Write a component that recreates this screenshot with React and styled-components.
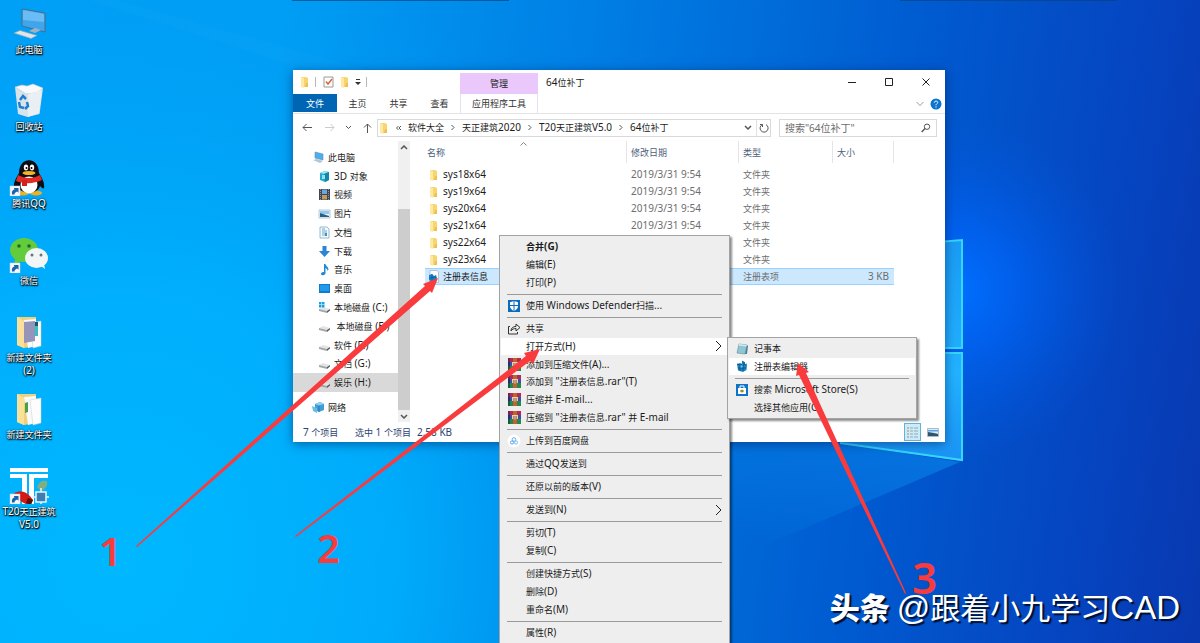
import React from "react";
import styled, { createGlobalStyle, css } from "styled-components";

const GlobalStyle = createGlobalStyle`
  *, *::before, *::after { box-sizing: border-box; }
  body {
    margin: 0;
    font-family: "Noto Sans", "Noto Sans CJK SC", sans-serif;
    font-size: 10px;
    line-height: 14px;
    color: #1b1b1b;
  }
  button, input { font: inherit; color: inherit; border: 0; margin: 0; padding: 0; background: none; }
  a { color: inherit; text-decoration: none; }
  svg { display: block; flex: none; }
`;

/* Chinese runs are set one step smaller than the Latin text beside them. */
const Cjk = styled.span`
  font-size: ${(p) => p.$size}px;
`;

function Text({ children, cjk = 9 }) {
  return (
    <span>
      {children
        .split(/([\u4e00-\u9fff]+)/)
        .filter(Boolean)
        .map((run, i) => (/[\u4e00-\u9fff]/.test(run) ? <Cjk key={i} $size={cjk}>{run}</Cjk> : run))}
    </span>
  );
}

/* ---------- desktop ---------- */

const Desktop = styled.main`
  position: relative;
  width: 100%;
  height: 100vh;
  overflow: hidden;
  background: linear-gradient(98deg, #009ff6 0%, #009df4 22%, #007fe4 46%, #005bd0 72%, #0546c2 88%, #0838b0 100%);
`;

const Layer = styled.svg`
  position: absolute;
  inset: 0;
  width: 100%;
  height: 100%;
  pointer-events: none;
`;

const DesktopIcons = styled.nav`
  position: relative;
  display: flex;
  flex-direction: column;
  width: 58px;
`;

const Shortcut = styled.button`
  display: flex;
  flex-direction: column;
  align-items: center;
  gap: 1px;
  height: 77px;
  padding-top: 6px;
  line-height: 13px;
  color: #fff;
  text-align: center;
  white-space: pre;
  text-shadow: 0 1px 2px #000, 1px 1px 1px #000, 0 0 2px rgba(0, 0, 0, 0.8);
`;

/* ---------- explorer window ---------- */

const Window = styled.section`
  position: absolute;
  left: 293px;
  top: 70px;
  width: 652px;
  display: flex;
  flex-direction: column;
  background: #fff;
  box-shadow: 0 2px 10px rgba(0, 20, 80, 0.5);
`;

const Ribbon = styled.header`
  display: grid;
  grid-template-columns: 167px 78px 1fr auto;
  grid-template-rows: 24px 19px;
  border-bottom: 1px solid #e4e4e4;
`;

const QuickBar = styled.div`
  display: flex;
  align-items: center;
  gap: 5px;
  padding-left: 6px;
`;

const Rule = styled.span`
  width: 1px;
  height: 10px;
  background: #b8b8b8;
`;

const ToolTitle = styled.div`
  display: flex;
  align-items: center;
  justify-content: center;
  margin-top: 3px;
  background: #eac8fb;
`;

const WindowTitle = styled.h1`
  margin: 0;
  padding-left: 8px;
  font-size: 10px;
  font-weight: 400;
  line-height: 24px;
`;

const Controls = styled.div`
  display: flex;
  button {
    display: grid;
    place-items: center;
    width: 37px;
    height: 24px;
  }
`;

const Tabs = styled.div`
  display: flex;
`;

const Tab = styled.button`
  flex: 1;
  height: 18px;
  color: #333;
  ${(p) => p.$primary && css`
    flex: none;
    width: 44px;
    color: #fff;
    background: #0065b3;
  `}
  ${(p) => p.$tool && css`
    height: 19px;
    border: solid #e8e0ee;
    border-width: 0 1px;
  `}
`;

const RibbonEnd = styled.div`
  grid-column: 3 / 5;
  display: flex;
  align-items: center;
  justify-content: flex-end;
  gap: 6px;
  padding-right: 3px;
`;

const AddressRow = styled.div`
  display: flex;
  align-items: center;
  height: 27px;
  padding: 0 8px;
`;

const NavButtons = styled.div`
  display: flex;
  align-items: center;
  justify-content: space-between;
  width: 71px;
  margin-right: 5px;
  padding-left: 1px;
`;

const Field = styled.div`
  display: flex;
  align-items: center;
  height: 18px;
  border: 1px solid #d9d9d9;
`;

const Address = styled(Field)`
  flex: 1;
  gap: 7px;
  margin-right: 8px;
  padding-right: 1px;
`;

const Push = styled.span`
  flex: 1;
`;

const AddressEnd = styled.div`
  display: flex;
  align-items: center;
  gap: 4px;
`;

const Refresh = styled.button`
  display: grid;
  place-items: center;
  height: 16px;
  padding-left: 2px;
  border-left: 1px solid #e2e2e2;
`;

const Search = styled(Field)`
  width: 158px;
  padding: 0 5px;
  input {
    flex: 1;
    min-width: 0;
    outline: 0;
    font-size: 10px;
  }
  input::placeholder { color: #6d6d6d; opacity: 1; }
`;

const Body = styled.div`
  display: flex;
  height: 281px;
`;

const Tree = styled.nav`
  width: 105px;
  padding-top: 7px;
`;

const TreeGroup = styled.div`
  display: grid;
  grid-auto-rows: 1fr;
  height: 244px;
  margin-bottom: 8px;
`;

const TreeItem = styled.a`
  display: flex;
  align-items: center;
  gap: 3px;
  min-height: 0;
  padding-left: ${(p) => (p.$root ? 19 : 25)}px;
  white-space: pre;
  background: ${(p) => (p.$selected ? "#d9d9d9" : "transparent")};
`;

const ScrollBar = styled.div`
  display: flex;
  flex-direction: column;
  width: 12px;
  background: #f0f0f0;
  button {
    display: grid;
    place-items: center;
    height: 12px;
  }
`;

const Thumb = styled.div`
  height: 201px;
  margin-top: auto;
  background: #cdcdcd;
`;

const Files = styled.table`
  position: relative;
  align-self: flex-start;
  width: 469px;
  margin-left: 15px;
  table-layout: fixed;
  border-collapse: separate;
  border-spacing: 0;
`;

const HeadCell = styled.th`
  width: ${(p) => p.$w}px;
  height: 25px;
  padding: 0 0 3px;
  font-weight: 400;
  text-align: left;
  color: #4c607a;
  button {
    display: block;
    width: 100%;
    height: 22px;
    padding-left: ${(p) => (p.$first ? 2 : 4)}px;
    text-align: left;
    border-right: 1px solid #e5e5e5;
  }
`;

const Row = styled.tr`
  td {
    height: 17px;
    padding: 0 0 0 4px;
    line-height: 15px;
    color: #6d6d6d;
    border: solid transparent;
    border-width: 1px 0;
    ${(p) => p.$selected && css`
      background: #cce8ff;
      border-color: #99d1ff;
    `}
  }
  td:first-child { padding-left: 3px; color: #1b1b1b; }
  td:last-child { padding-right: 5px; text-align: right; }
`;

const FileName = styled.span`
  display: flex;
  align-items: center;
  gap: 4px;
`;

const SortMark = styled.span`
  position: absolute;
  left: 95px;
  top: 1px;
`;

const StatusBar = styled.footer`
  display: flex;
  align-items: center;
  gap: 6px;
  height: 20px;
  padding: 0 6px 0 10px;
  color: #2c4470;
  white-space: pre;
`;

const Count = styled.span`
  width: 46px;
`;

const ViewButton = styled.button`
  display: grid;
  place-items: center;
  width: 17px;
  height: 18px;
  border: 1px solid ${(p) => (p.$on ? "#5fb4dc" : "transparent")};
  background: ${(p) => (p.$on ? "#cdebf7" : "transparent")};
`;

/* ---------- context menus ---------- */

const Menu = styled.div`
  position: absolute;
  left: ${(p) => p.$x}px;
  top: ${(p) => p.$y}px;
  width: ${(p) => p.$w}px;
  padding: 2px 1px;
  background: #eee;
  border: 1px solid #a3a3a3;
  box-shadow: 2px 2px 2px rgba(0, 0, 0, 0.45);
`;

const groupHeight = { 1: 17, 2: 35, 3: 53, 6: 106 };

const MenuGroup = styled.div`
  display: grid;
  grid-auto-rows: 1fr;
  height: ${(p) => groupHeight[p.$count]}px;
`;

const Separator = styled.hr`
  height: 1px;
  margin: 3px 6px 2px;
  border: 0;
  background: #9b9b9b;
`;

const MenuItem = styled.button`
  display: grid;
  grid-template-columns: 14px 1fr auto;
  align-items: center;
  gap: 5px;
  min-height: 0;
  padding: 0 6px;
  line-height: 14px;
  text-align: left;
  white-space: pre;
  font-weight: ${(p) => (p.$bold ? 700 : 400)};
  background: ${(p) => (p.$active ? "#fff" : "transparent")};
`;

/* ---------- annotations ---------- */

const Note = styled.span`
  position: absolute;
  left: ${(p) => p.$x}px;
  top: ${(p) => p.$y}px;
  font-size: ${(p) => p.$size}px;
  line-height: 40px;
  font-weight: 600;
  color: #f93b3d;
`;

const Watermark = styled.p`
  position: absolute;
  right: 20px;
  bottom: 14px;
  display: flex;
  align-items: baseline;
  gap: 7px;
  margin: 0;
  font-family: "Liberation Sans", "Noto Sans CJK SC", sans-serif;
  font-size: 33px;
  line-height: 40px;
  color: #fff;
  white-space: nowrap;
  text-shadow: 2px 2px 1px #00102e;
  strong { font-size: 30px; font-weight: 900; }
`;

/* ---------- drawings ---------- */

const Chevron = ({ d, w = 8, h = 8, color = "#555", sw = 1 }) => (
  <svg width={w} height={h} viewBox={`0 0 ${w} ${h}`} fill="none" stroke={color} strokeWidth={sw}>
    <path d={d} />
  </svg>
);

const FolderIcon = () => (
  <svg width="11" height="12" viewBox="0 0 11 12">
    <path d="M2 1h5l2 1v9H2z" fill="#f7d672" />
    <path d="M2 1l3 1v10L2 11z" fill="#ffe9a2" />
    <path d="M7 7h2v4H6z" fill="#efc04f" />
  </svg>
);

const RegFileIcon = () => (
  <svg width="11" height="13" viewBox="0 0 11 13">
    <path d="M2 .5h7l1.500 1.500v10.500H2z" fill="#fafcff" stroke="#9db2c5" strokeWidth=".7" />
    <path d="M1 5l3-1 2 2 2-1 1 3-1 3-4 1-3-2z" fill="#1786c8" />
    <path d="M4 4v8M1 8l7-1" stroke="#0c5c98" strokeWidth=".8" />
  </svg>
);

const RegEditIcon = () => (
  <svg width="14" height="14" viewBox="0 0 14 14">
    <path d="M2 5l3-1 2 1V2l3 1v2l2 1-.5 5L8 13l-5-1.500z" fill="#1a86c4" />
    <path d="M2 5l3 1v6M5 6l2-1M8 6v6M8 6l4-1M3 9l8 0M7 2l2 1.500v2" stroke="#0a4f80" fill="none" strokeWidth=".8" />
    <path d="M5.500 6.500h2v2h-2z" fill="#6fd3f2" />
  </svg>
);

const TreeIcon = ({ kind }) => (
  <svg width="13" height="13" viewBox="0 0 13 13">
    {kind === "pc" && (
      <>
        <path d="M3 1l8 2v6L3 7z" fill="#4aaef0" stroke="#6b8ba6" strokeWidth=".6" />
        <path d="M1 9l4-1 6 2-3 2z" fill="#b4c5d3" />
      </>
    )}
    {kind === "cube" && (
      <>
        <path d="M2 3l5-2 4 1v8l-4 2-5-2z" fill="#25a9cf" />
        <path d="M2 3l5-2 4 1-5 2z" fill="#9be4f3" />
        <path d="M6 4l5-2v8l-4 2z" fill="#1585ad" />
        <path d="M4 5h3v4H4z" fill="#8fe1f0" />
      </>
    )}
    {kind === "video" && (
      <>
        <path d="M1 1h11v11H1z" fill="#3d4652" />
        <path d="M4 1.500h5v4.500H4z" fill="#6ea4d8" />
        <path d="M4 7h5v4.500H4z" fill="#c39a62" />
        <path d="M2.500 1v11M10.500 1v11" stroke="#8c949c" strokeDasharray="1 1" />
      </>
    )}
    {kind === "pictures" && (
      <>
        <path d="M1 3h11v8H1z" fill="#eef6fb" stroke="#9eb4c4" strokeWidth=".7" />
        <path d="M2 4h9v3H2z" fill="#8fc9ee" />
        <path d="M2 6l3 1 6 2v1H2z" fill="#285f86" />
      </>
    )}
    {kind === "doc" && (
      <>
        <path d="M2 1h7l2 2v9H2z" fill="#f4fafd" stroke="#7ea8bf" strokeWidth=".8" />
        <path d="M4 3h3M4 5h5M4 7h5M4 9h5" stroke="#5a9fc6" strokeWidth=".9" />
        <path d="M7 7h2v3H7z" fill="#3f93c4" />
      </>
    )}
    {kind === "down" && <path d="M4.500 1h4v5H12L6.500 12 1 6h3.500z" fill="#2d83d4" />}
    {kind === "music" && (
      <path d="M6 1h1.500c0 2 3 2.500 3 5.500l-1 1.500c0-2-1-2.500-2-3V10c0 1.500-1.500 2.500-3 2.200C2 11.800 2.500 9 6 9z" fill="#1c8ad6" />
    )}
    {kind === "desk" && (
      <>
        <path d="M1 2h11v9H1z" fill="#1579c9" />
        <path d="M2 3h9v6H2z" fill="#1e9bea" />
      </>
    )}
    {(kind === "drive" || kind === "sysdrive") && (
      <>
        <path d="M1 8l4-2 7 2-3 2z" fill="#e2e4e6" />
        <path d="M1 8l8 2v2L1 10z" fill="#a3a7ab" />
        <path d="M9 10l3-2v1.500L9 12z" fill="#55595d" />
      </>
    )}
    {kind === "sysdrive" && <path d="M1 1h2.500v2.500H1zM4 1h2.500v2.500H4zM1 4h2.500v2.500H1zM4 4h2.500v2.500H4z" fill="#1ba1e2" />}
    {kind === "net" && (
      <>
        <path d="M3 3l5-2 4 2v6l-5 2-4-2z" fill="#3f9ed6" />
        <path d="M3 3l5-2 4 2-5 1.500z" fill="#90d0f2" />
        <path d="M7 4.500V11" stroke="#1d6fa5" strokeWidth=".8" />
        <path d="M0 5l5 2v5L1 10z" fill="#6abbe8" />
      </>
    )}
  </svg>
);

const RarIcon = () => (
  <svg width="14" height="13" viewBox="0 0 14 13">
    <path d="M1 0h13v4H1z" fill="#b02a52" />
    <path d="M1 4h13v4H1z" fill="#3b4fa8" />
    <path d="M1 8h13v5H1z" fill="#1f8a4c" />
    <path d="M1 0h2v4H1z" fill="#6b2458" />
    <path d="M1 4h2v4H1z" fill="#23306f" />
    <path d="M1 8h2v5H1z" fill="#145c3a" />
    <path d="M6 0h4v13H6z" fill="#c4602e" />
    <path d="M5 4h6v4H5z" fill="#e8d3a4" />
    <path d="M6.500 5h3v3h-3z" fill="#8c3c4a" />
    <path d="M7.500 4.500h1v4h-1z" fill="#f7efd8" />
  </svg>
);

const MenuIcon = ({ kind }) => {
  if (kind === "rar") return <RarIcon />;
  if (kind === "reg") return <RegEditIcon />;
  return (
    <svg width="14" height="14" viewBox="0 0 14 14">
      {kind === "defender" && (
        <>
          <path d="M1 1h12v12H1z" fill="#0b6cbd" />
          <path d="M7 2l4 1.300v3.700c0 2.500-2 4-4 5-2-1-4-2.500-4-5V3.300z" fill="#fff" />
          <path d="M7 2v10M3 6.500h8" stroke="#0b6cbd" />
        </>
      )}
      {kind === "share" && (
        <path d="M3 4.500H1.500v7.500h9V10M4 9c0-3 2-4.500 5-4.500V2l4 3.500L9 9V6.500C7 6.500 5 7 4 9z" fill="none" stroke="#333" />
      )}
      {kind === "baidu" && (
        <>
          <circle cx="7" cy="7" r="6.500" fill="#fff" />
          <circle cx="7" cy="5.500" r="1.800" fill="none" stroke="#6aaef2" />
          <circle cx="5" cy="8.500" r="1.600" fill="none" stroke="#5a9fee" />
          <circle cx="9" cy="8.500" r="1.600" fill="none" stroke="#7abfe0" />
        </>
      )}
      {kind === "notepad" && (
        <>
          <path d="M4 2l8 1-2 9-8-1z" fill="#8dc6d4" stroke="#6e98a5" strokeWidth=".7" />
          <path d="M4 2l8 1-.4 1.500-8-1z" fill="#d8ecef" />
          <path d="M10 12l2-9 1 1-1 8z" fill="#4b8190" />
        </>
      )}
      {kind === "store" && (
        <>
          <path d="M1 1h12v12H1z" fill="#1173c8" />
          <path d="M3 5h8v6H3z" fill="#fff" />
          <path d="M5 5V3h4v2" fill="none" stroke="#fff" />
          <circle cx="7" cy="8" r="1.600" fill="#e0a526" />
          <path d="M5.500 8h3" stroke="#2b7d3c" />
        </>
      )}
    </svg>
  );
};

const LinkBadge = () => (
  <>
    <path d="M1 26h10v10H1z" fill="#f5f8fb" stroke="#c8d4de" strokeWidth=".5" />
    <path d="M3 34.500c-.5-3 .5-4.800 2.500-5L4.800 28H9.500v4.700L8.200 31.500C6.500 32 5.500 33 5.500 34.500z" fill="#1b62ad" />
  </>
);

const BigIcon = ({ kind }) => (
  <svg width="40" height="36" viewBox="0 0 40 36">
    {kind === "pc" && (
      <>
        <path d="M13 3l23 4v19l-23-6z" fill="#41a5ec" stroke="#4a6d88" />
        <path d="M14 4l21 4v8L14 14z" fill="#6abcf4" />
        <path d="M20 25l6-3 6 2-6 3z" fill="#9fb2c2" />
        <path d="M5 27l6-2.500 17 5-6 3z" fill="#dfe5ea" stroke="#97a7b4" strokeWidth=".7" />
      </>
    )}
    {kind === "bin" && (
      <>
        <path d="M6 4l28 1-3.500 26-12 3L9 31z" fill="#d9e3ea" />
        <path d="M6 4l7-2 5 1 6-2 10 4-6 5-11 1z" fill="#f7f9fa" stroke="#b3c3ce" strokeWidth=".6" />
        <path d="M19 11l14-4-3 23-11 4z" fill="#e9eff2" />
        <path d="M11 17l3-4 3 3M10 19l1 5 4 1M18 19l1 4-3 3" fill="none" stroke="#1e7fd0" strokeWidth="2.500" />
      </>
    )}
    {kind === "qq" && (
      <>
        <ellipse cx="14" cy="33" rx="6" ry="2.500" fill="#f2b01e" />
        <ellipse cx="27" cy="33" rx="6" ry="2.500" fill="#f2b01e" />
        <path d="M10 13C10-4 30-4 30 13c3 5 6 10 5 15-1 1-2 0-4-2-2 9-20 9-22 0-2 2-3 3-4 2-1-5 2-10 5-15z" fill="#0d0d12" />
        <ellipse cx="20" cy="25" rx="8.500" ry="8.500" fill="#fff" />
        <path d="M9 15c7 4 15 4 22 0l2 5c-8 4-18 4-26 1z" fill="#e22a25" />
        <path d="M13 20h5v6h-5z" fill="#d31f1d" />
        <ellipse cx="17" cy="7.500" rx="2.200" ry="3" fill="#fff" />
        <ellipse cx="23" cy="7.500" rx="2.200" ry="3" fill="#fff" />
        <circle cx="17.500" cy="8" r="1" />
        <circle cx="22.500" cy="8" r="1" />
        <ellipse cx="20" cy="13" rx="6.500" ry="2" fill="#f6b321" />
        <LinkBadge />
      </>
    )}
    {kind === "wechat" && (
      <>
        <ellipse cx="15" cy="13" rx="14" ry="12" fill="#62cc3d" />
        <path d="M6 22l-1 6 7-4z" fill="#62cc3d" />
        <circle cx="10" cy="9" r="1.800" fill="#216a20" />
        <circle cx="20" cy="9" r="1.800" fill="#216a20" />
        <ellipse cx="27.500" cy="21" rx="11.500" ry="10" fill="#f3f6f7" />
        <path d="M32 29l4 3-1-5z" fill="#f3f6f7" />
        <circle cx="23" cy="18" r="1.500" fill="#68757d" />
        <circle cx="32" cy="18" r="1.500" fill="#68757d" />
        <LinkBadge />
      </>
    )}
    {(kind === "folder1" || kind === "folder2") && (
      <>
        <path d="M8 3h19v29l-12 2-7-3z" fill="#f2cf7b" />
        <path d="M15 6l12-1v27l-8 2z" fill="#f8fafb" />
        <path d="M21 9l11-2v25l-8 2z" fill="#fdfdfe" stroke="#c6ccd2" strokeWidth=".5" />
        {kind === "folder1" ? (
          <>
            <path d="M15 8l11-1v20l-11 2z" fill="#9495b8" />
            <path d="M26 8h3v14h-3z" fill="#37bfc8" />
            <path d="M26 8h3v4h-3z" fill="#1e5666" />
          </>
        ) : (
          <path d="M16 12l3-1v10l-3 1z" fill="#49a04c" />
        )}
        <path d="M8 3l7 4v27l-7-3z" fill="#fbe09a" />
      </>
    )}
    {kind === "t20" && (
      <>
        <path d="M1 0h38v4H1zM1 6h17v30h-5V10H1zM20 6h19v4H25v26h-5z" fill="#fff" />
        <path d="M5 25c7-3 13-2 19 7l-3 5c-7-1-12-5-16-12z" fill="#d51914" />
        <path d="M19 30l5 2-2 5-5-2z" fill="#571010" />
        <path d="M28 19c2-6 6-7 10-6 1 4-1 8-6 10z" fill="#80ae83" />
        <path d="M27 24h10v10H27zM32 20v4M32 34v4M23 29h4M37 29h3" fill="#397eb5" stroke="#e9f4fb" strokeWidth="1.500" />
        <LinkBadge />
      </>
    )}
  </svg>
);

const Wallpaper = () => (
  <Layer viewBox="0 0 1200 643" preserveAspectRatio="none" aria-hidden="true">
    <defs>
      <radialGradient id="sky" gradientUnits="userSpaceOnUse" cx="120" cy="560" r="620">
        <stop offset="0" stopColor="#00b8ff" />
        <stop offset=".45" stopColor="#00b2ff" stopOpacity=".8" />
        <stop offset="1" stopColor="#00a0f4" stopOpacity="0" />
      </radialGradient>
      <radialGradient id="glow" gradientUnits="userSpaceOnUse" cx="955" cy="290" r="170">
        <stop offset="0" stopColor="#0070ff" />
        <stop offset=".35" stopColor="#0066fa" stopOpacity=".7" />
        <stop offset="1" stopColor="#0058e0" stopOpacity="0" />
      </radialGradient>
      <linearGradient id="beam" x1="1" y1="0" x2="0" y2=".7">
        <stop offset="0" stopColor="#0a8df0" stopOpacity=".6" />
        <stop offset="1" stopColor="#0a9cf5" stopOpacity="0" />
      </linearGradient>
      <linearGradient id="pane" x1="0" y1="0" x2="0" y2="1">
        <stop offset="0" stopColor="#1a9cf4" />
        <stop offset=".6" stopColor="#22b2ff" />
        <stop offset="1" stopColor="#1a93f5" />
      </linearGradient>
    </defs>
    <path d="M0 0h1200v643H0z" fill="url(#sky)" />
    <path d="M115 0l252 70h-60L90 0z" fill="#38b6ff" opacity=".08" />
    <path d="M785 120h415v350H785z" fill="url(#glow)" />
    <path d="M960 462L730 560V440h90z" fill="url(#beam)" />
    <path d="M900 245l62-5v108h-62zM840 353h122v108l-122-18z" fill="url(#pane)" />
    <path d="M900 245l62-5v108h-62M900 353h62v107l-122-17" fill="none" stroke="#35d6ff" strokeWidth="2" />
    <path d="M292 0h217v1H292zM900 0h217v1H900z" fill="#04447c" opacity=".7" />
  </Layer>
);

/* ---------- content ---------- */

const shortcuts = [
  ["pc", "此电脑"],
  ["bin", "回收站"],
  ["qq", "腾讯QQ"],
  ["wechat", "微信"],
  ["folder1", "新建文件夹\n(2)"],
  ["folder2", "新建文件夹"],
  ["t20", "T20天正建筑\nV5.0"],
];

const tree = [
  ["pc", "此电脑"],
  ["cube", "3D 对象"],
  ["video", "视频"],
  ["pictures", "图片"],
  ["doc", "文档"],
  ["down", "下载"],
  ["music", "音乐"],
  ["desk", "桌面"],
  ["sysdrive", "本地磁盘 (C:)"],
  ["drive", " 本地磁盘 (E:)"],
  ["drive", "软件 (F:)"],
  ["drive", "文档 (G:)"],
  ["drive", "娱乐 (H:)"],
];

const folders = ["sys18x64", "sys19x64", "sys20x64", "sys21x64", "sys22x64", "sys23x64"];

const mainMenu = [
  [{ label: "合并(G)", bold: true }, { label: "编辑(E)" }, { label: "打印(P)" }],
  [{ icon: "defender", label: "使用 Windows Defender扫描..." }],
  [
    { icon: "share", label: "共享" },
    { label: "打开方式(H)", more: true, active: true },
    { icon: "rar", label: "添加到压缩文件(A)..." },
    { icon: "rar", label: '添加到 "注册表信息.rar"(T)' },
    { icon: "rar", label: "压缩并 E-mail..." },
    { icon: "rar", label: '压缩到 "注册表信息.rar" 并 E-mail' },
  ],
  [{ icon: "baidu", label: "上传到百度网盘" }],
  [{ label: "通过QQ发送到" }],
  [{ label: "还原以前的版本(V)" }],
  [{ label: "发送到(N)", more: true }],
  [{ label: "剪切(T)" }, { label: "复制(C)" }],
  [{ label: "创建快捷方式(S)" }, { label: "删除(D)" }, { label: "重命名(M)" }],
  [{ label: "属性(R)" }],
];

const openWithMenu = [
  [{ icon: "notepad", label: "记事本" }, { icon: "reg", label: "注册表编辑器", active: true }],
  [{ icon: "store", label: "搜索 Microsoft Store(S)" }, { label: "选择其他应用(C)" }],
];

function PopupMenu({ groups, x, y, w, name }) {
  return (
    <Menu role="menu" aria-label={name} $x={x} $y={y} $w={w}>
      {groups.map((items, g) => (
        <React.Fragment key={g}>
          {g > 0 && <Separator />}
          <MenuGroup $count={items.length}>
            {items.map((it) => (
              <MenuItem key={it.label} role="menuitem" $bold={it.bold} $active={it.active}>
                {it.icon ? <MenuIcon kind={it.icon} /> : <span />}
                <Text>{it.label}</Text>
                {it.more && <Chevron w={7} h={12} d="M1 1l5 5-5 5" color="#222" />}
              </MenuItem>
            ))}
          </MenuGroup>
        </React.Fragment>
      ))}
    </Menu>
  );
}

function Explorer() {
  const crumb = <Chevron w={4} h={7} d="M.5 1L3 3.500.5 6" />;
  return (
    <Window aria-label="64位补丁">
      <Ribbon>
        <QuickBar>
          <FolderIcon />
          <Rule />
          <svg width="13" height="12" viewBox="0 0 13 12">
            <path d="M3 1h9v10H3z" fill="#fff" stroke="#9a9a9a" />
            <path d="M5 5.500L7 8l4-5" fill="none" stroke="#d9663a" strokeWidth="1.500" />
          </svg>
          <FolderIcon />
          <svg width="6" height="6" viewBox="0 0 6 6">
            <path d="M1 0h4v1H1zM0 3h6L3 6z" fill="#333" />
          </svg>
          <Rule />
        </QuickBar>
        <ToolTitle><Text>管理</Text></ToolTitle>
        <WindowTitle><Text>64位补丁</Text></WindowTitle>
        <Controls>
          <button aria-label="最小化"><Chevron w={9} h={9} d="M0 4.500h8" color="#222" /></button>
          <button aria-label="最大化"><Chevron w={9} h={9} d="M.5.5h7v7h-7z" color="#222" /></button>
          <button aria-label="关闭"><Chevron w={9} h={9} d="M.5.5l7 7M7.500.5l-7 7" color="#222" /></button>
        </Controls>
        <Tabs>
          <Tab $primary><Text>文件</Text></Tab>
          <Tab><Text>主页</Text></Tab>
          <Tab><Text>共享</Text></Tab>
          <Tab><Text>查看</Text></Tab>
        </Tabs>
        <Tab $tool><Text>应用程序工具</Text></Tab>
        <RibbonEnd>
          <Chevron w={8} h={6} d="M.5 1L4 4.500 7.500 1" color="#999" />
          <svg width="12" height="12" viewBox="0 0 12 12">
            <circle cx="6" cy="6" r="5.500" fill="#0b74cf" />
            <path d="M4.300 4.700C4.300 2.400 8 2.600 7.700 4.700 7.500 5.800 6 5.800 6 7.200M6 8.300v1.200" fill="none" stroke="#fff" />
          </svg>
        </RibbonEnd>
      </Ribbon>
      <AddressRow>
        <NavButtons>
          <Chevron w={11} h={9} d="M10 4.500H1M4.500 1L1 4.500 4.500 8" />
          <Chevron w={11} h={9} d="M1 4.500h9M6.500 1L10 4.500 6.500 8" color="#ccc" />
          <Chevron w={7} h={5} d="M1 1l2.500 2.500L6 1" />
          <Chevron w={9} h={10} d="M4.500 10V1M1 4.500L4.500 1 8 4.500" />
        </NavButtons>
        <Address>
          <FolderIcon />
          <Chevron w={5} h={6} d="M2.500 1l-2 2 2 2M5 1L3 3l2 2" />
          <Text>软件大全</Text>
          {crumb}
          <Text>天正建筑2020</Text>
          {crumb}
          <Text>T20天正建筑V5.0</Text>
          {crumb}
          <Text>64位补丁</Text>
          <Push />
          <AddressEnd>
            <Chevron w={8} h={6} d="M1 1l3 3 3-3" sw={1.5} />
            <Refresh aria-label="刷新">
              <Chevron w={10} h={10} d="M3.200 1.600A4 4 0 1 0 7 1.600M3.500 4V1.500H1" />
            </Refresh>
          </AddressEnd>
        </Address>
        <Search as="label">
          <input aria-label="搜索" placeholder={'搜索"64位补丁"'} />
          <svg width="10" height="10" viewBox="0 0 10 10" fill="none" stroke="#555">
            <circle cx="6" cy="3.700" r="2.700" />
            <path d="M4 5.500L.7 9" strokeWidth="1.400" />
          </svg>
        </Search>
      </AddressRow>
      <Body>
        <Tree>
          <TreeGroup>
            {tree.map(([kind, label], i) => (
              <TreeItem key={label} href="#" $root={i === 0} $selected={i === tree.length - 1}>
                <TreeIcon kind={kind} />
                <Text>{label}</Text>
              </TreeItem>
            ))}
          </TreeGroup>
          <TreeItem href="#" $root>
            <TreeIcon kind="net" />
            <Text>网络</Text>
          </TreeItem>
        </Tree>
        <ScrollBar>
          <button aria-label="向上滚动"><Chevron w={8} h={5} d="M1 4l3-3 3 3" sw={1.5} /></button>
          <Thumb />
          <button aria-label="向下滚动"><Chevron w={8} h={5} d="M1 1l3 3 3-3" sw={1.5} /></button>
        </ScrollBar>
        <Files>
          <thead>
            <tr>
              <HeadCell $w={202} $first>
                <button><Text>名称</Text></button>
                <SortMark><Chevron w={7} h={4} d="M.5 3.500l3-3 3 3" color="#888" /></SortMark>
              </HeadCell>
              <HeadCell $w={112}><button><Text>修改日期</Text></button></HeadCell>
              <HeadCell $w={94}><button><Text>类型</Text></button></HeadCell>
              <HeadCell $w={61}><button><Text>大小</Text></button></HeadCell>
            </tr>
          </thead>
          <tbody>
            {folders.map((f) => (
              <Row key={f}>
                <td><FileName><FolderIcon />{f}</FileName></td>
                <td>2019/3/31 9:54</td>
                <td><Text>文件夹</Text></td>
                <td />
              </Row>
            ))}
            <Row $selected>
              <td><FileName><RegFileIcon /><Text>注册表信息</Text></FileName></td>
              <td />
              <td><Text>注册表项</Text></td>
              <td>3 KB</td>
            </Row>
          </tbody>
        </Files>
      </Body>
      <StatusBar>
        <Count><Text>7 个项目</Text></Count>
        <Text>选中 1 个项目</Text>
        <span>2.58 KB</span>
        <Push />
        <ViewButton $on aria-label="详细信息">
          <svg width="13" height="12" viewBox="0 0 13 12">
            <path d="M1 2h2M1 5h2M1 8h2M1 11h2" stroke="#b5895e" />
            <path d="M4 2h3M8 2h4M4 5h3M8 5h4M4 8h3M8 8h4M4 11h3M8 11h4" stroke="#8fa9b8" />
          </svg>
        </ViewButton>
        <svg width="12" height="9" viewBox="0 0 12 9">
          <path d="M.5.5h11v8H.5z" fill="#dbe9f6" stroke="#a5bccd" />
          <path d="M1 4l6 1 4 1v2H1z" fill="#2e5570" />
          <path d="M1 2h10v1.500H1z" fill="#5ea5e0" />
        </svg>
      </StatusBar>
    </Window>
  );
}

export default function App() {
  return (
    <>
      <GlobalStyle />
      <Desktop>
        <Wallpaper />
        <DesktopIcons>
          {shortcuts.map(([kind, label]) => (
            <Shortcut key={kind}>
              <BigIcon kind={kind} />
              <Text>{label}</Text>
            </Shortcut>
          ))}
        </DesktopIcons>
        <Explorer />
        <PopupMenu name="文件" groups={mainMenu} x={499} y={235} w={231} />
        <PopupMenu name="打开方式" groups={openWithMenu} x={727} y={337} w={190} />
        <Layer viewBox="0 0 1200 643" preserveAspectRatio="none" aria-hidden="true">
          <g fill="#f93b3d">
            <path d="M136 546L425 286l-2-2 15-6-6 15-2-2L137 547z" />
            <path d="M295 536L526 356l-2-3 16-4-7 15-3-3L296 537z" />
            <path d="M905 594L799 375l-3 1 2-13 11 9-3 1 100 220z" />
          </g>
        </Layer>
        <Note $x={99} $y={531} $size={40}>1</Note>
        <Note $x={317} $y={528} $size={40}>2</Note>
        <Note $x={912} $y={557} $size={44}>3</Note>
        <Watermark>
          <strong>头条</strong>
          <Text cjk={30}>@跟着小九学习CAD</Text>
        </Watermark>
      </Desktop>
    </>
  );
}
